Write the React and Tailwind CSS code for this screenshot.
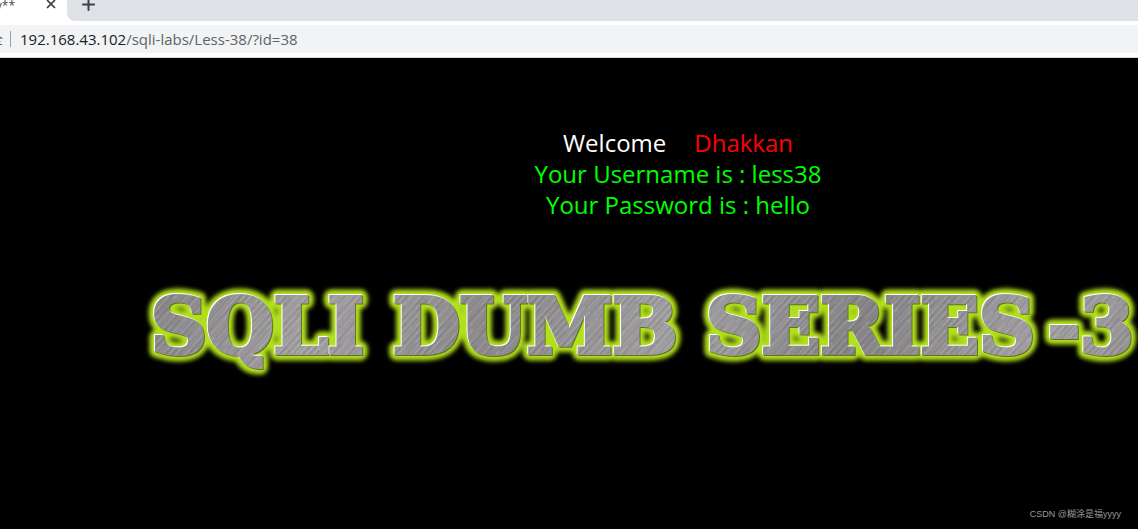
import { Plus, X } from "lucide-react";

function Words(props) {
  return (
    <g {...props}>
      <text x="8" y="80">SQLI</text>
      <text x="250" y="80">DUMB</text>
      <text x="563" y="80">SERIES</text>
      <text x="905" y="80">-3</text>
    </g>
  );
}

function Logo() {
  return (
    <svg
      width="1080"
      height="120"
      viewBox="0 0 1080 120"
      role="img"
      aria-label="SQLI DUMB SERIES-3"
      className="block shrink-0"
      style={{ fontFamily: '"DejaVu Serif", serif', fontWeight: 700, fontSize: 77 }}
    >
      <defs>
        <linearGradient id="steel" x1="0" y1="0" x2="330" y2="110" gradientUnits="userSpaceOnUse" spreadMethod="reflect">
          <stop offset="0" stopColor="#858385" />
          <stop offset="0.5" stopColor="#a09ea0" />
          <stop offset="1" stopColor="#8a888a" />
        </linearGradient>
        <pattern id="brush" width="17" height="90" patternUnits="userSpaceOnUse" patternTransform="rotate(42)">
          <path d="M1 0V70M6 20V90M11 0V50M14 40V90" stroke="#fff" strokeOpacity="0.14" />
          <path d="M3 0V90M8 10V60M13 30V90" stroke="#222" strokeOpacity="0.12" />
        </pattern>
        <filter id="soft" x="-5%" y="-40%" width="110%" height="180%">
          <feGaussianBlur stdDeviation="2" />
        </filter>
      </defs>
      <Words fill="#b2e01f" stroke="#b2e01f" strokeWidth="15" strokeLinejoin="round" filter="url(#soft)" />
      <Words fill="#5f7424" stroke="#5f7424" strokeWidth="4" transform="translate(1 1)" />
      <Words fill="#fff" stroke="#fff" strokeWidth="4" transform="translate(-1 -1)" />
      <Words fill="url(#steel)" stroke="url(#steel)" strokeWidth="4" />
      <Words fill="url(#brush)" stroke="url(#brush)" strokeWidth="4" />
    </svg>
  );
}

export default function App() {
  return (
    <div className="flex min-h-screen flex-col overflow-hidden bg-black font-['Open_Sans','Noto_Sans_CJK_SC',sans-serif]">
      <header className="bg-white">
        <div className="flex h-[21px]">
          <div className="flex w-[67px] items-start justify-between pr-[9px]">
            <span className="flex h-4 w-[15px] justify-end overflow-hidden text-xs leading-3 text-[#45494d]">y**</span>
            <button aria-label="Close tab" className="-mt-[3px] text-[#3c4043]">
              <X size={14} strokeWidth={3} />
            </button>
          </div>
          <div className="flex flex-1 items-start rounded-bl-lg bg-[#dee1e6] pl-3">
            <button aria-label="New tab" className="-mt-[5px] text-[#3c4043]">
              <Plus size={19} strokeWidth={2.5} />
            </button>
          </div>
        </div>
        <div className="border-b border-[#d5d7da] py-1">
          <div className="flex h-7 items-center bg-[#f1f3f4]">
            <span className="flex w-[3px] justify-end overflow-hidden text-sm text-[#5f6368]">全</span>
            <span className="ml-[7px] h-4 w-px bg-[#9aa0a6]" />
            <a href="#" className="ml-[9px] text-[15px] leading-[26px] text-[#5f6368]">
              <span className="text-[#202124]">192.168.43.102</span>/sqli-labs/Less-38/?id=38
            </a>
          </div>
        </div>
      </header>
      <main className="flex flex-1 flex-col">
        <div className="pl-[218px] pt-[69px] text-center text-2xl leading-[31px] text-[#00ff00]">
          <p className="text-white">
            Welcome<span className="ml-7 text-[#ff0000]">Dhakkan</span>
          </p>
          <p>Your Username is : less38</p>
          <p>Your Password is : hello</p>
        </div>
        <div className="flex w-full overflow-hidden pl-[143px] pt-[53px]">
          <Logo />
        </div>
      </main>
      <footer className="pb-[7px] pr-[17px] text-right font-['Liberation_Sans','Noto_Sans_CJK_SC',sans-serif] text-[9px] leading-[15px] text-[#9a9a9a]">
        CSDN @糊涂是福yyyy
      </footer>
    </div>
  );
}
